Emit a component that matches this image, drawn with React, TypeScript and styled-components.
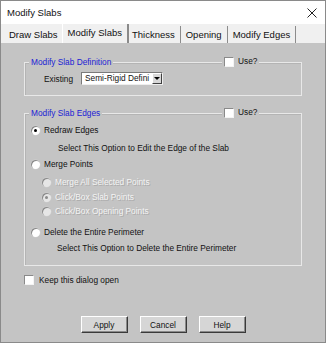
import React from "react";
import styled, { createGlobalStyle } from "styled-components";

const Global = createGlobalStyle`
  html, body { margin: 0; padding: 0; background: #ffffff; }
  * { box-sizing: border-box; }
  body { font-family: "Liberation Sans", Arial, sans-serif; }
`;

const Window = styled.div`
  width: 326px;
  height: 343px;
  border: 1px solid #8a8a8a;
  display: flex;
  flex-direction: column;
  background: #c4c4c4;
  overflow: hidden;
`;

const TitleBar = styled.div`
  height: 23px;
  flex: none;
  background: #ffffff;
  display: flex;
  align-items: center;
  justify-content: space-between;
  padding: 0 8px 0 6px;
  font-size: 9.5px;
  color: #111;
`;

const TabStrip = styled.div`
  height: 19px;
  flex: none;
  background: #f0f0f0;
  display: flex;
  align-items: flex-end;
  padding-left: 3px;
`;

const Tab = styled.div<{ $active?: boolean }>`
  font-size: 9.5px;
  color: #111;
  white-space: nowrap;
  display: flex;
  align-items: center;
  padding: 0 5px;
  height: ${(p) => (p.$active ? "19px" : "17px")};
  padding-bottom: ${(p) => (p.$active ? "3px" : "1px")};
  margin: ${(p) => (p.$active ? "0 -2px" : "0")};
  position: relative;
  z-index: ${(p) => (p.$active ? 1 : 0)};
  background: #f0f0f0;
  border-right: ${(p) => (p.$active ? "2px solid #8a8a8a" : "1px solid #8c8c8c")};
  border-left: ${(p) => (p.$active ? "1px solid #ffffff" : "none")};
`;

const Body = styled.div`
  flex: 1;
  background: #c4c4c4;
  padding: 19px 23px 0 23px;
  display: flex;
  flex-direction: column;
  font-size: 8.3px;
  color: #111;
`;

const GroupBox = styled.div<{ $top: number; $height: number }>`
  position: relative;
  margin-top: ${(p) => p.$top}px;
  height: ${(p) => p.$height}px;
  border: 1px solid #e8e8e8;
  box-shadow: inset 1px 1px 0 #b4b4b4;
  display: flex;
  flex-direction: column;
`;

const GroupTitle = styled.div`
  position: absolute;
  left: 4px;
  top: -6px;
  padding: 0 2px;
  background: #c4c4c4;
  color: #1c1cd4;
  line-height: 11px;
  white-space: nowrap;
`;

const UseToggle = styled.div`
  position: absolute;
  left: 197px;
  top: -7px;
  padding: 0 2px;
  background: #c4c4c4;
  display: flex;
  align-items: center;
  gap: 4px;
  line-height: 11px;
`;

const Check = styled.span`
  display: inline-block;
  width: 10px;
  height: 10px;
  flex: none;
  background: #ffffff;
  border-top: 1px solid #8a8a8a;
  border-left: 1px solid #8a8a8a;
  border-bottom: 1px solid #f4f4f4;
  border-right: 1px solid #f4f4f4;
`;

const DefRow = styled.div`
  display: flex;
  align-items: center;
  padding: 9px 0 0 19px;
  gap: 8px;
`;

const Combo = styled.div`
  width: 82px;
  height: 13px;
  background: #ffffff;
  border-top: 1px solid #7a7a7a;
  border-left: 1px solid #7a7a7a;
  border-bottom: 1px solid #eeeeee;
  border-right: 1px solid #eeeeee;
  display: flex;
  align-items: stretch;
`;

const ComboText = styled.div`
  flex: 1;
  overflow: hidden;
  white-space: nowrap;
  padding-left: 3px;
  line-height: 11px;
`;

const ComboButton = styled.div`
  width: 10px;
  flex: none;
  background: #d8d8d8;
  border-top: 1px solid #ffffff;
  border-left: 1px solid #ffffff;
  border-bottom: 1px solid #404040;
  border-right: 1px solid #404040;
  display: flex;
  align-items: center;
  justify-content: center;
  &::after {
    content: "";
    border-left: 3px solid transparent;
    border-right: 3px solid transparent;
    border-top: 3px solid #000;
  }
`;

const Row = styled.div<{ $top: number; $indent: number; $disabled?: boolean }>`
  height: 14px;
  flex: none;
  margin-top: ${(p) => p.$top}px;
  padding-left: ${(p) => p.$indent}px;
  display: flex;
  align-items: center;
  gap: 4px;
  white-space: nowrap;
  color: ${(p) => (p.$disabled ? "#f4f4f4" : "#111")};
  text-shadow: ${(p) => (p.$disabled ? "1px 1px 0 #aaaaaa" : "none")};
`;

const Radio = styled.span<{ $checked?: boolean; $disabled?: boolean }>`
  width: 9px;
  height: 9px;
  flex: none;
  border-radius: 50%;
  background: ${(p) => (p.$disabled ? "#e6e6e6" : "#ffffff")};
  box-shadow: inset 1px 1px 0 #8a8a8a, 0 0 0 0.5px #d0d0d0;
  display: flex;
  align-items: center;
  justify-content: center;
  text-shadow: none;
  &::after {
    content: "";
    display: ${(p) => (p.$checked ? "block" : "none")};
    width: 3px;
    height: 3px;
    border-radius: 50%;
    background: ${(p) => (p.$disabled ? "#8a8a8a" : "#000")};
  }
`;

const KeepRow = styled.div`
  margin-top: 8px;
  display: flex;
  align-items: center;
  gap: 5px;
  height: 11px;
`;

const ButtonRow = styled.div`
  margin-top: 31px;
  display: flex;
  justify-content: center;
  gap: 12px;
`;

const Button = styled.div`
  width: 47px;
  height: 17px;
  background: #d6d6d6;
  border-top: 1px solid #ffffff;
  border-left: 1px solid #ffffff;
  border-bottom: 1px solid #3a3a3a;
  border-right: 1px solid #3a3a3a;
  box-shadow: inset -1px -1px 0 #8a8a8a;
  display: flex;
  align-items: center;
  justify-content: center;
  font-size: 8.3px;
  color: #111;
`;

const CloseIcon = () => (
  <svg width="10" height="10" viewBox="0 0 10 10">
    <path d="M0.5 0.5 L9.5 9.5 M9.5 0.5 L0.5 9.5" stroke="#222" strokeWidth="1" />
  </svg>
);

export default function App() {
  return (
    <>
      <Global />
      <Window>
        <TitleBar>
          <span>Modify Slabs</span>
          <CloseIcon />
        </TitleBar>
        <TabStrip>
          <Tab>Draw Slabs</Tab>
          <Tab $active>Modify Slabs</Tab>
          <Tab>Thickness</Tab>
          <Tab>Opening</Tab>
          <Tab>Modify Edges</Tab>
        </TabStrip>
        <Body>
          <GroupBox $top={0} $height={34}>
            <GroupTitle>Modify Slab Definition</GroupTitle>
            <UseToggle>
              <Check />
              <span>Use?</span>
            </UseToggle>
            <DefRow>
              <span>Existing</span>
              <Combo>
                <ComboText>Semi-Rigid Defini</ComboText>
                <ComboButton />
              </Combo>
            </DefRow>
          </GroupBox>

          <GroupBox $top={17} $height={153}>
            <GroupTitle>Modify Slab Edges</GroupTitle>
            <UseToggle>
              <Check />
              <span>Use?</span>
            </UseToggle>
            <Row $top={9} $indent={6}>
              <Radio $checked />
              <span>Redraw Edges</span>
            </Row>
            <Row $top={4} $indent={33}>
              Select This Option to Edit the Edge of the Slab
            </Row>
            <Row $top={2} $indent={6}>
              <Radio />
              <span>Merge Points</span>
            </Row>
            <Row $top={4} $indent={17} $disabled>
              <Radio $disabled />
              <span>Merge All Selected Points</span>
            </Row>
            <Row $top={1} $indent={17} $disabled>
              <Radio $disabled $checked />
              <span>Click/Box Slab Points</span>
            </Row>
            <Row $top={0} $indent={17} $disabled>
              <Radio $disabled />
              <span>Click/Box Opening Points</span>
            </Row>
            <Row $top={7} $indent={6}>
              <Radio />
              <span>Delete the Entire Perimeter</span>
            </Row>
            <Row $top={2} $indent={32}>
              Select This Option to Delete the Entire Perimeter
            </Row>
          </GroupBox>

          <KeepRow>
            <Check />
            <span>Keep this dialog open</span>
          </KeepRow>

          <ButtonRow>
            <Button>Apply</Button>
            <Button>Cancel</Button>
            <Button>Help</Button>
          </ButtonRow>
        </Body>
      </Window>
    </>
  );
}
